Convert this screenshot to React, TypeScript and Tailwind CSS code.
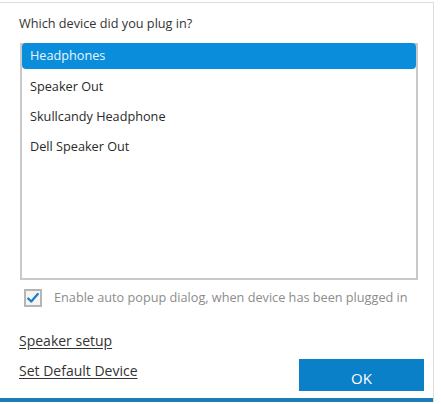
import React from 'react';

const devices = ['Headphones', 'Speaker Out', 'Skullcandy Headphone', 'Dell Speaker Out'];

export default function App() {
    const selected = 0;
    return (
        <div className="w-[441px] h-[404px] bg-white overflow-hidden" style={{ fontFamily: '"Open Sans", "Noto Sans", sans-serif' }}>
            <div className="mt-[2px] w-[434px] h-[400px] border-t border-r border-[#dcdcdc] flex flex-col">
                <p className="pl-[19px] pt-[11px] text-[12.7px] leading-[18px] text-[#333]">Which device did you plug in?</p>

                <div className="ml-[20px] mt-[11px] w-[398px] h-[237px] border-2 border-[#c9c9c9] flex flex-col">
                    {devices.map((d, i) => (
                        <div
                            key={d}
                            className={
                                i === selected
                                    ? 'h-[26px] -mt-[2px] mb-[1px] rounded-[4px] bg-[#0a8ddb] text-[#e8f7ff] pl-[8px] flex items-center text-[12.7px]'
                                    : 'h-[30px] pl-[8px] pt-[4px] flex items-center text-[12.7px] text-[#2a2a2a]'
                            }
                        >
                            {d}
                        </div>
                    ))}
                </div>

                <label className="ml-[24px] mt-[8px] flex items-center gap-[12px]">
                    <span className="w-[18px] h-[18px] border-2 border-[#b5b5b5] bg-[#f4f4f4] flex items-center justify-center">
                        <svg viewBox="0 0 16 16" className="w-[16px] h-[16px]">
                            <path d="M2.5 8.5 L6 12 L13.5 3.5" fill="none" stroke="#1b7fc2" strokeWidth="2.6" strokeLinecap="round" strokeLinejoin="round" />
                        </svg>
                    </span>
                    <span className="text-[12.7px] text-[#8c8c8c]">Enable auto popup dialog, when device has been plugged in</span>
                </label>

                <div className="flex justify-between items-start mt-[24px]">
                    <div className="pl-[19px] flex flex-col gap-[11px]">
                        <a className="text-[14px] leading-[19px] text-[#333] underline underline-offset-2">Speaker setup</a>
                        <a className="text-[14px] leading-[19px] text-[#333] underline underline-offset-2">Set Default Device</a>
                    </div>
                    <button className="w-[125px] h-[32px] mt-[28px] mr-[9px] bg-[#0a80c8] text-white text-[15px] pt-[6px]">OK</button>
                </div>

                <div className="mt-auto h-[4px] bg-[#1a7db6]" />
            </div>
        </div>
    );
}
